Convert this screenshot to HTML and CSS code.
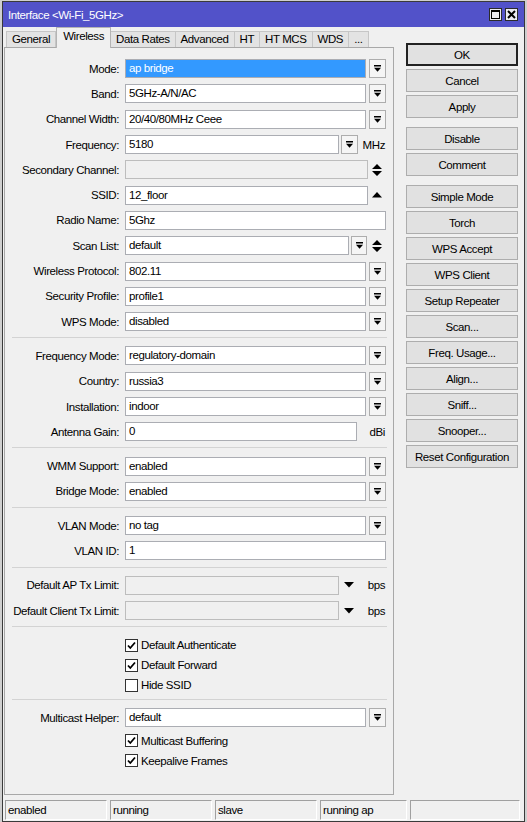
FILE: index.html
```html
<!DOCTYPE html>
<html lang="en">
<head>
    <meta charset="UTF-8">
    <title>Interface &lt;Wi-Fi_5GHz&gt;</title>
    <link rel="stylesheet" href="styles.css">
</head>
<body>

<div class="window">
    <div class="titlebar">
        <span class="title">Interface &lt;Wi-Fi_5GHz&gt;</span>
        <span class="tb-btn">
            <svg width="9" height="9" viewBox="0 0 9 9"><rect x="0.5" y="0.5" width="8" height="8" fill="none" stroke="#000"/><rect x="0" y="0" width="9" height="2" fill="#000"/></svg>
        </span>
        <span class="tb-btn">
            <svg width="9" height="9" viewBox="0 0 9 9"><path d="M1 1 L8 8 M8 1 L1 8" stroke="#000" stroke-width="2"/></svg>
        </span>
    </div>

    <div class="client">
        <div class="left">
            <div class="tabs">
                <span class="tab">General</span>
                <span class="tab active">Wireless</span>
                <span class="tab">Data Rates</span>
                <span class="tab">Advanced</span>
                <span class="tab">HT</span>
                <span class="tab">HT MCS</span>
                <span class="tab">WDS</span>
                <span class="tab">...</span>
            </div>

            <div class="panel">
                <div class="row">
                    <span class="label">Mode:</span>
                    <div class="field"><span class="input selected">ap bridge</span><span class="drop"><svg width="7" height="7" viewBox="0 0 7 7"><rect width="7" height="1.5"/><path d="M0 2.8 H7 L3.5 6.8 Z"/></svg></span></div>
                </div>
                <div class="row">
                    <span class="label">Band:</span>
                    <div class="field"><span class="input">5GHz-A/N/AC</span><span class="drop"><svg width="7" height="7" viewBox="0 0 7 7"><rect width="7" height="1.5"/><path d="M0 2.8 H7 L3.5 6.8 Z"/></svg></span></div>
                </div>
                <div class="row">
                    <span class="label">Channel Width:</span>
                    <div class="field"><span class="input">20/40/80MHz Ceee</span><span class="drop"><svg width="7" height="7" viewBox="0 0 7 7"><rect width="7" height="1.5"/><path d="M0 2.8 H7 L3.5 6.8 Z"/></svg></span></div>
                </div>
                <div class="row">
                    <span class="label">Frequency:</span>
                    <div class="field"><span class="input freq">5180</span><span class="drop near"><svg width="7" height="7" viewBox="0 0 7 7"><rect width="7" height="1.5"/><path d="M0 2.8 H7 L3.5 6.8 Z"/></svg></span><span class="unit">MHz</span></div>
                </div>
                <div class="row">
                    <span class="label">Secondary Channel:</span>
                    <div class="field"><span class="input ssid disabled"></span><span class="slot"><svg width="10" height="12" viewBox="0 0 10 12"><path d="M5 0 L10 5 H0 Z M0 7 H10 L5 12 Z"/></svg></span></div>
                </div>
                <div class="row">
                    <span class="label">SSID:</span>
                    <div class="field"><span class="input ssid">12_floor</span><span class="slot"><svg width="10" height="6" viewBox="0 0 10 6"><path d="M5 0 L10 5.5 H0 Z"/></svg></span></div>
                </div>
                <div class="row">
                    <span class="label">Radio Name:</span>
                    <div class="field"><span class="input">5Ghz</span></div>
                </div>
                <div class="row">
                    <span class="label">Scan List:</span>
                    <div class="field"><span class="input scan">default</span><span class="drop near narrow"><svg width="7" height="7" viewBox="0 0 7 7"><rect width="7" height="1.5"/><path d="M0 2.8 H7 L3.5 6.8 Z"/></svg></span><span class="slot"><svg width="10" height="12" viewBox="0 0 10 12"><path d="M5 0 L10 5 H0 Z M0 7 H10 L5 12 Z"/></svg></span></div>
                </div>
                <div class="row">
                    <span class="label">Wireless Protocol:</span>
                    <div class="field"><span class="input">802.11</span><span class="drop"><svg width="7" height="7" viewBox="0 0 7 7"><rect width="7" height="1.5"/><path d="M0 2.8 H7 L3.5 6.8 Z"/></svg></span></div>
                </div>
                <div class="row">
                    <span class="label">Security Profile:</span>
                    <div class="field"><span class="input">profile1</span><span class="drop"><svg width="7" height="7" viewBox="0 0 7 7"><rect width="7" height="1.5"/><path d="M0 2.8 H7 L3.5 6.8 Z"/></svg></span></div>
                </div>
                <div class="row">
                    <span class="label">WPS Mode:</span>
                    <div class="field"><span class="input">disabled</span><span class="drop"><svg width="7" height="7" viewBox="0 0 7 7"><rect width="7" height="1.5"/><path d="M0 2.8 H7 L3.5 6.8 Z"/></svg></span></div>
                </div>

                <div class="sep"></div>

                <div class="row">
                    <span class="label">Frequency Mode:</span>
                    <div class="field"><span class="input">regulatory-domain</span><span class="drop"><svg width="7" height="7" viewBox="0 0 7 7"><rect width="7" height="1.5"/><path d="M0 2.8 H7 L3.5 6.8 Z"/></svg></span></div>
                </div>
                <div class="row">
                    <span class="label">Country:</span>
                    <div class="field"><span class="input">russia3</span><span class="drop"><svg width="7" height="7" viewBox="0 0 7 7"><rect width="7" height="1.5"/><path d="M0 2.8 H7 L3.5 6.8 Z"/></svg></span></div>
                </div>
                <div class="row">
                    <span class="label">Installation:</span>
                    <div class="field"><span class="input">indoor</span><span class="drop"><svg width="7" height="7" viewBox="0 0 7 7"><rect width="7" height="1.5"/><path d="M0 2.8 H7 L3.5 6.8 Z"/></svg></span></div>
                </div>
                <div class="row">
                    <span class="label">Antenna Gain:</span>
                    <div class="field"><span class="input gain">0</span><span class="unit">dBi</span></div>
                </div>

                <div class="sep"></div>

                <div class="row">
                    <span class="label">WMM Support:</span>
                    <div class="field"><span class="input">enabled</span><span class="drop"><svg width="7" height="7" viewBox="0 0 7 7"><rect width="7" height="1.5"/><path d="M0 2.8 H7 L3.5 6.8 Z"/></svg></span></div>
                </div>
                <div class="row">
                    <span class="label">Bridge Mode:</span>
                    <div class="field"><span class="input">enabled</span><span class="drop"><svg width="7" height="7" viewBox="0 0 7 7"><rect width="7" height="1.5"/><path d="M0 2.8 H7 L3.5 6.8 Z"/></svg></span></div>
                </div>

                <div class="sep"></div>

                <div class="row">
                    <span class="label">VLAN Mode:</span>
                    <div class="field"><span class="input">no tag</span><span class="drop"><svg width="7" height="7" viewBox="0 0 7 7"><rect width="7" height="1.5"/><path d="M0 2.8 H7 L3.5 6.8 Z"/></svg></span></div>
                </div>
                <div class="row">
                    <span class="label">VLAN ID:</span>
                    <div class="field"><span class="input">1</span></div>
                </div>

                <div class="sep"></div>

                <div class="row">
                    <span class="label">Default AP Tx Limit:</span>
                    <div class="field"><span class="input freq disabled"></span><span class="tri"><svg width="10" height="6" viewBox="0 0 10 6"><path d="M0 0 H10 L5 5.5 Z"/></svg></span><span class="unit">bps</span></div>
                </div>
                <div class="row">
                    <span class="label">Default Client Tx Limit:</span>
                    <div class="field"><span class="input freq disabled"></span><span class="tri"><svg width="10" height="6" viewBox="0 0 10 6"><path d="M0 0 H10 L5 5.5 Z"/></svg></span><span class="unit">bps</span></div>
                </div>

                <div class="sep"></div>

                <div class="checks">
                    <div class="check-row"><span class="box"><svg width="11" height="11" viewBox="0 0 11 11"><path d="M2 5.5 L4.3 8 L9 2.5" fill="none" stroke="#000" stroke-width="1.8"/></svg></span>Default Authenticate</div>
                    <div class="check-row"><span class="box"><svg width="11" height="11" viewBox="0 0 11 11"><path d="M2 5.5 L4.3 8 L9 2.5" fill="none" stroke="#000" stroke-width="1.8"/></svg></span>Default Forward</div>
                    <div class="check-row"><span class="box"></span>Hide SSID</div>
                </div>

                <div class="sep"></div>

                <div class="row">
                    <span class="label">Multicast Helper:</span>
                    <div class="field"><span class="input">default</span><span class="drop"><svg width="7" height="7" viewBox="0 0 7 7"><rect width="7" height="1.5"/><path d="M0 2.8 H7 L3.5 6.8 Z"/></svg></span></div>
                </div>
                <div class="check-row"><span class="box"><svg width="11" height="11" viewBox="0 0 11 11"><path d="M2 5.5 L4.3 8 L9 2.5" fill="none" stroke="#000" stroke-width="1.8"/></svg></span>Multicast Buffering</div>
                <div class="check-row"><span class="box"><svg width="11" height="11" viewBox="0 0 11 11"><path d="M2 5.5 L4.3 8 L9 2.5" fill="none" stroke="#000" stroke-width="1.8"/></svg></span>Keepalive Frames</div>
            </div>
        </div>

        <div class="actions">
            <button class="btn default">OK</button>
            <button class="btn">Cancel</button>
            <button class="btn">Apply</button>
            <button class="btn group">Disable</button>
            <button class="btn">Comment</button>
            <button class="btn group">Simple Mode</button>
            <button class="btn">Torch</button>
            <button class="btn">WPS Accept</button>
            <button class="btn">WPS Client</button>
            <button class="btn">Setup Repeater</button>
            <button class="btn">Scan...</button>
            <button class="btn">Freq. Usage...</button>
            <button class="btn">Align...</button>
            <button class="btn">Sniff...</button>
            <button class="btn">Snooper...</button>
            <button class="btn">Reset Configuration</button>
        </div>
    </div>

    <div class="statusbar">
        <span class="cell w102">enabled</span>
        <span class="cell w102">running</span>
        <span class="cell w102">slave</span>
        <span class="cell w87">running ap</span>
        <span class="cell w110"></span>
    </div>
</div>

</body>
</html>
```

FILE: styles.css
```css
* {
    box-sizing: border-box;
}
body {
    margin: 0;
    padding-top: 1px;
    background-color: #cfcfcf;
    font-family: "Liberation Sans", Arial, sans-serif;
    font-size: 11.5px;
    letter-spacing: -0.4px;
    color: #000;
}
.window {
    width: 523px;
    height: 821px;
    margin-left: 2px;
    border: 1px solid #3a3a3a;
    background-color: #f0f0f0;
    display: flex;
    flex-direction: column;
}

/* title bar */
.titlebar {
    height: 25px;
    flex: none;
    background-color: #5252c9;
    color: #fff;
    display: flex;
    align-items: center;
    padding: 0 6px 0 5px;
}
.title {
    flex: 1;
}
.tb-btn {
    width: 13px;
    height: 13px;
    margin-left: 3px;
    background-color: #ececf2;
    border: 1px solid #2b2b2b;
    display: flex;
    align-items: center;
    justify-content: center;
}

/* main area */
.client {
    height: 770px;
    flex: none;
    display: flex;
}
.left {
    width: 390px;
    margin-left: 1px;
    display: flex;
    flex-direction: column;
}
.tabs {
    height: 20px;
    display: flex;
    align-items: flex-end;
    padding-left: 2px;
}
.tab {
    height: 16px;
    padding: 0 5px;
    line-height: 15px;
    background-color: #e3e3e3;
    border: 1px solid #c6c6c6;
    border-bottom: none;
    white-space: nowrap;
}
.tab + .tab {
    border-left: none;
}
.tab.active {
    height: 21px;
    margin-bottom: -1px;
    padding: 0 6px;
    line-height: 16px;
    background-color: #f0f0f0;
    border-color: #b4b4b4;
    border-left: 1px solid #b4b4b4;
    position: relative;
    z-index: 1;
}
.tab.active + .tab {
    border-left: none;
}
.panel {
    height: 748px;
    border: 1px solid #a8a8a8;
    padding-top: 8px;
}

/* form rows */
.row {
    height: 25.3px;
    display: flex;
    align-items: center;
}
.label {
    width: 114px;
    margin-right: 6px;
    text-align: right;
    white-space: nowrap;
}
.field {
    width: 261px;
    display: flex;
    align-items: center;
}
.input {
    flex: 1;
    height: 19px;
    border: 1px solid #abadb3;
    background-color: #fff;
    padding-left: 3px;
    line-height: 17px;
    white-space: nowrap;
    overflow: hidden;
}
.input.selected {
    background-color: #3399ff;
    color: #fff;
}
.input.disabled {
    background-color: #f0f0f0;
    border-color: #bdbdbd;
}
.input.freq {
    flex: none;
    width: 214px;
}
.input.scan {
    flex: none;
    width: 224px;
}
.input.gain {
    flex: none;
    width: 232px;
}
.input.ssid {
    flex: none;
    width: 243px;
}
.drop {
    width: 17px;
    height: 19px;
    margin-left: 3px;
    border: 1px solid #adadad;
    background-color: #f5f5f5;
    display: flex;
    align-items: center;
    justify-content: center;
}
.drop.near {
    margin-left: 2px;
}
.drop.narrow {
    width: 16px;
}
.slot {
    width: 18px;
    margin-left: auto;
    display: flex;
    justify-content: center;
}
.tri {
    width: 10px;
    margin-left: 5px;
    display: flex;
}
.unit {
    margin-left: auto;
    padding-right: 1px;
}
.sep {
    height: 1px;
    background-color: #d3d3d3;
    margin: 3px 6px 5px 7px;
}

/* checkboxes */
.checks {
    padding: 3px 0 1px;
}
.check-row {
    height: 20px;
    display: flex;
    align-items: center;
    padding-left: 120px;
}
.box {
    width: 13px;
    height: 13px;
    margin-right: 3px;
    border: 1px solid #333;
    background-color: #fff;
    display: flex;
    align-items: center;
    justify-content: center;
}

/* buttons on the right */
.actions {
    margin-left: 12px;
    padding-top: 16px;
    display: flex;
    flex-direction: column;
}
.btn {
    width: 112px;
    height: 23px;
    margin-bottom: 3px;
    padding: 0;
    background-color: #e1e1e1;
    border: 1px solid #adadad;
    font-family: inherit;
    font-size: inherit;
    letter-spacing: inherit;
    white-space: nowrap;
    color: #000;
}
.btn.default {
    border: 2px solid #222;
}
.btn.group {
    margin-top: 6px;
}

/* status bar */
.statusbar {
    height: 24px;
    flex: none;
    display: flex;
    gap: 3px;
    padding: 3px 0 1px 2px;
}
.cell {
    height: 20px;
    padding-left: 2px;
    line-height: 18px;
    border: 1px solid;
    border-color: #a0a0a0 #fff #fff #a0a0a0;
    white-space: nowrap;
}
.w102 { width: 102px; }
.w87 { width: 87px; }
.w110 { width: 110px; }
```
